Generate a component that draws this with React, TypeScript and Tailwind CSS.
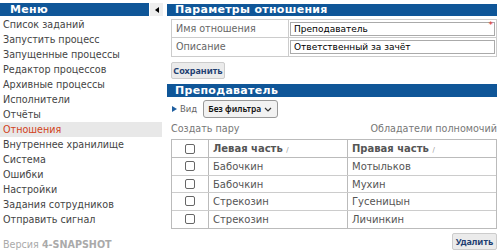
import React from "react";

const menu = [
  "Список заданий",
  "Запустить процесс",
  "Запущенные процессы",
  "Редактор процессов",
  "Архивные процессы",
  "Исполнители",
  "Отчёты",
  "Отношения",
  "Внутреннее хранилище",
  "Система",
  "Ошибки",
  "Настройки",
  "Задания сотрудников",
  "Отправить сигнал",
];

const rows = [
  ["Бабочкин", "Мотыльков"],
  ["Бабочкин", "Мухин"],
  ["Стрекозин", "Гусеницын"],
  ["Стрекозин", "Личинкин"],
];

function Box() {
  return <span className="inline-block w-[10px] h-[10px] border border-[#666] rounded-[2px] bg-white" />;
}

const btnFont = { fontFamily: '"Noto Sans", "DejaVu Sans", sans-serif' };

export default function App() {
  return (
    <div
      className="w-[500px] h-[252px] bg-white flex overflow-hidden text-[9.6px] text-[#444]"
      style={{ fontFamily: '"DejaVu Sans", Verdana, sans-serif' }}
    >
      <div className="w-[163px] flex flex-col pt-[3px]">
        <div className="flex h-[13px] items-stretch">
          <div className="flex-1 bg-[#0f5698] text-white font-bold text-[11px] leading-[13px] pl-[10px] tracking-[0.3px]">Меню</div>
          <div className="w-[13px] ml-[1px] bg-[#eeeeee] flex items-center justify-center">
            <span className="block w-0 h-0 border-y-[3px] border-y-transparent border-r-[4px] border-r-black" />
          </div>
        </div>
        <div className="flex flex-col mt-[1px]">
          {menu.map((m) => (
            <div
              key={m}
              className={
                "h-[15px] leading-[15px] pl-[3px] mr-[1px] whitespace-nowrap " +
                (m === "Отношения" ? "bg-[#e8e8e8] text-[#d2421a]" : "text-[#444]")
              }
            >
              {m}
            </div>
          ))}
        </div>
        <div className="mt-[5px] h-[2px] bg-[#8a8a8a] mx-[1px]" />
        <div className="mt-[6px] pl-[3px] text-[#aaa] text-[9.6px]">
          Версия <b>4-SNAPSHOT</b>
        </div>
      </div>

      <div className="flex-1 ml-[4px] pt-[4px] pr-[3px] flex flex-col">
        <div className="h-[12px] bg-[#0f5698] text-white font-bold text-[11px] leading-[12px] pl-[8px] tracking-[0.3px]">
          Параметры отношения
        </div>
        <div className="ml-[4px] mt-[3px] border border-[#ccc]">
          <div className="flex h-[18px] border-b border-[#ccc]">
            <div className="w-[117px] border-r border-[#ccc] pl-[4px] leading-[18px] text-[#666]">Имя отношения</div>
            <div className="flex-1 px-[1px] py-[2px] relative">
              <div className="h-[14px] border border-[#aaa] leading-[12px] pl-[3px] text-[9px] text-black">Преподаватель</div>
              <span className="absolute right-[3px] top-[1px] text-[#e03030] text-[9px] leading-[9px]">*</span>
            </div>
          </div>
          <div className="flex h-[18px]">
            <div className="w-[117px] border-r border-[#ccc] pl-[4px] leading-[18px] text-[#666]">Описание</div>
            <div className="flex-1 px-[1px] py-[2px]">
              <div className="h-[14px] border border-[#aaa] leading-[12px] pl-[3px] text-[9px] text-black">Ответственный за зачёт</div>
            </div>
          </div>
        </div>
        <div className="ml-[4px] mt-[5px]">
          <button
            className="h-[17px] w-[54px] bg-[#ebebeb] border border-[#ccc] rounded-[2px] text-[9px] font-bold text-[#1e3f72] leading-[15px]"
            style={btnFont}
          >
            Сохранить
          </button>
        </div>
        <div className="mt-[5px] h-[13px] bg-[#0f5698] text-white font-bold text-[11px] leading-[13px] pl-[8px] tracking-[0.3px]">
          Преподаватель
        </div>
        <div className="ml-[5px] mt-[3px] flex items-center h-[18px]">
          <span className="block w-0 h-0 border-y-[3px] border-y-transparent border-l-[5px] border-l-[#1f5fa0]" />
          <span className="ml-[3px] text-[8.5px] text-[#666]">Вид</span>
          <div
            className="ml-[6px] h-[18px] w-[75px] border border-[#999] rounded-[3px] bg-[#f2f2f2] flex items-center justify-between pl-[4px] pr-[5px] text-[8.5px] font-semibold text-[#111] whitespace-nowrap"
            style={btnFont}
          >
            <span>Без фильтра</span>
            <svg className="shrink-0" width="8" height="5" viewBox="0 0 8 5">
              <path d="M1 1 L4 4 L7 1" fill="none" stroke="#333" strokeWidth="1.2" />
            </svg>
          </div>
        </div>
        <div className="ml-[4px] mt-[4px] flex justify-between text-[#777] leading-[14px]">
          <span>Создать пару</span>
          <span>Обладатели полномочий</span>
        </div>
        <div className="ml-[4px] mt-[3px] border border-[#bbb]">
          <div className="flex h-[18px] border-b border-[#bbb]">
            <div className="w-[37px] border-r border-[#bbb] flex items-center justify-center"><Box /></div>
            <div className="w-[139px] border-r border-[#bbb] pl-[4px] leading-[18px] font-bold text-[#555] text-[10px]">
              Левая часть <span className="text-[7px] font-normal text-[#999]">/</span>
            </div>
            <div className="flex-1 pl-[4px] leading-[18px] font-bold text-[#555] text-[10px]">
              Правая часть <span className="text-[7px] font-normal text-[#999]">/</span>
            </div>
          </div>
          {rows.map((r, i) => (
            <div key={i} className={"flex h-[17.5px] text-[10px] " + (i < rows.length - 1 ? "border-b border-[#ccc]" : "")}>
              <div className="w-[37px] border-r border-[#bbb] flex items-center justify-center"><Box /></div>
              <div className="w-[139px] border-r border-[#bbb] pl-[4px] leading-[17px] text-[#555]">{r[0]}</div>
              <div className="flex-1 pl-[4px] leading-[17px] text-[#555]">{r[1]}</div>
            </div>
          ))}
        </div>
        <div className="flex justify-end mt-[4px]">
          <button
            className="h-[17px] w-[45px] bg-[#ebebeb] border border-[#ccc] rounded-[2px] text-[9px] font-bold text-[#1e3f72] leading-[15px]"
            style={btnFont}
          >
            Удалить
          </button>
        </div>
      </div>
    </div>
  );
}
